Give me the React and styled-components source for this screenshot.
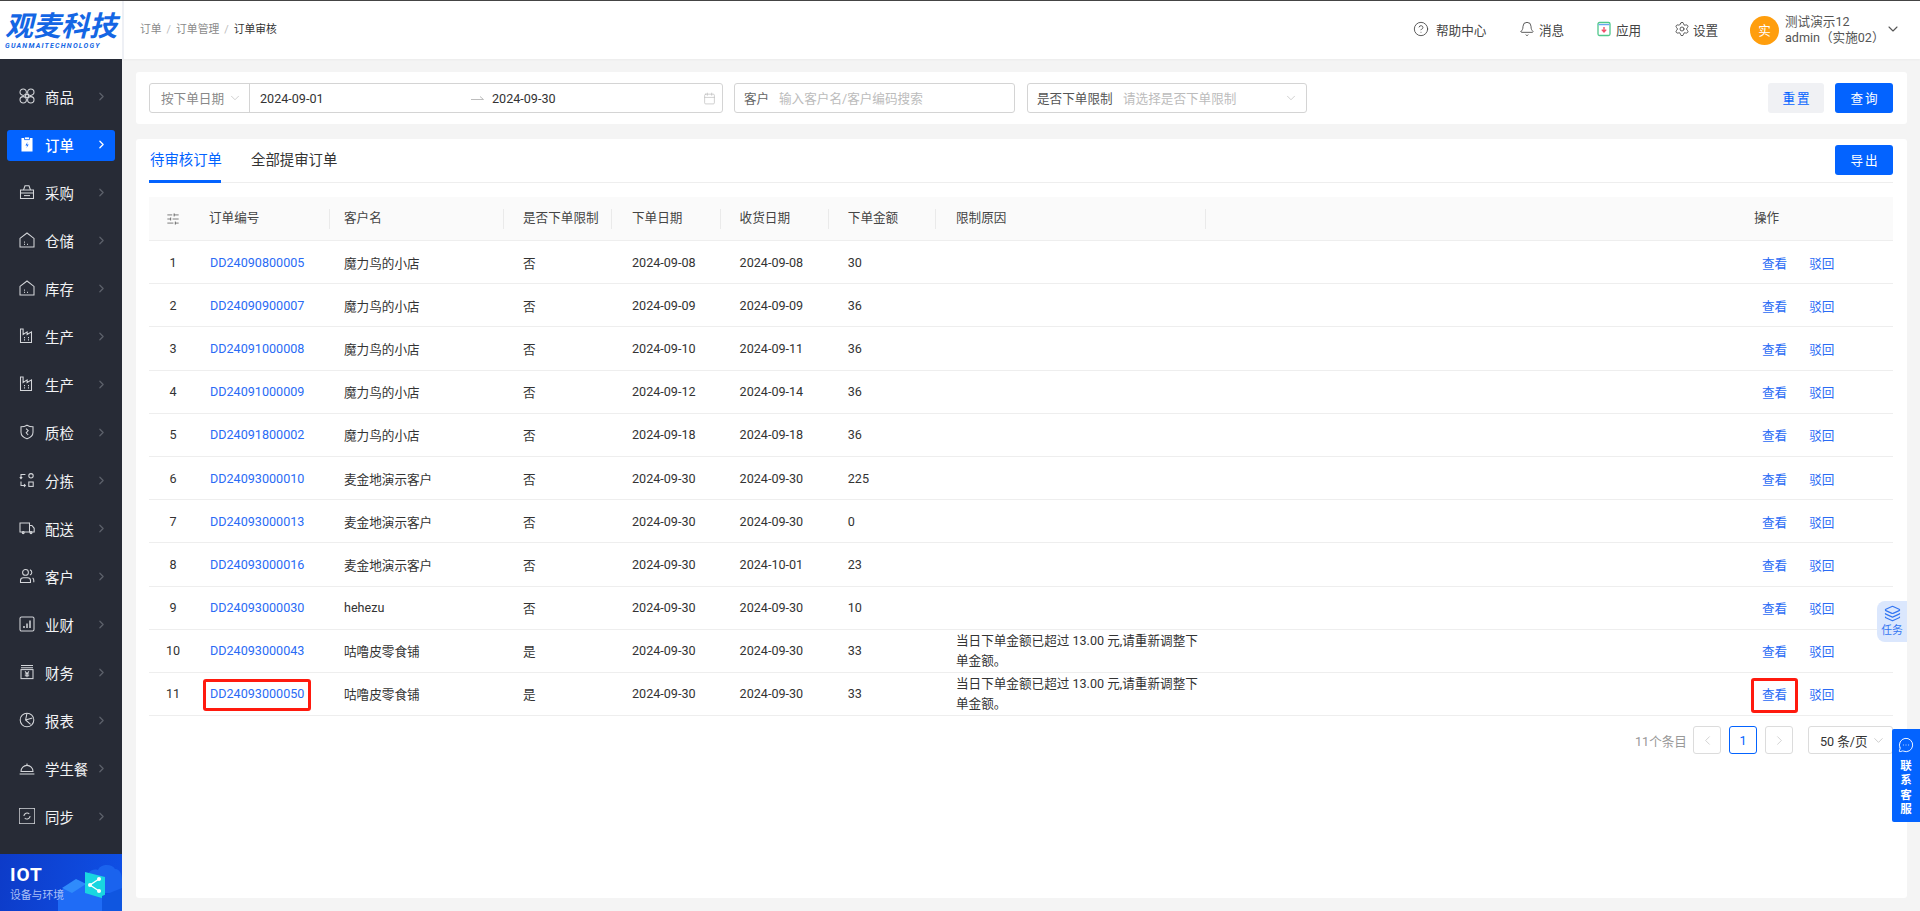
import React from "react";
import styled, { createGlobalStyle } from "styled-components";
import {
  Bell,
  Calendar,
  ChevronDown,
  ChevronLeft,
  ChevronRight,
  CircleHelp,
  Layers,
  MessageCircleMore,
  Settings,
  SlidersHorizontal,
} from "lucide-react";

const BLUE = "#0363ff";
const FONT = `Roboto, "Noto Sans CJK SC", sans-serif`;

const GlobalStyle = createGlobalStyle`
  html, body {
    margin: 0;
    padding: 0;
    height: 100%;
    background: #f4f4f4;
    font-family: ${FONT};
    overflow: hidden;
  }
  * { box-sizing: border-box; }
`;

const menuIcons = {
  goods: (
    <>
      <circle cx="4.2" cy="4.2" r="3.2" />
      <circle cx="11.8" cy="4.2" r="3.2" />
      <circle cx="4.2" cy="11.8" r="3.2" />
      <circle cx="11.8" cy="11.8" r="3.2" />
      <rect x="6.6" y="6.6" width="2.8" height="2.8" />
    </>
  ),
  order: (
    <>
      <path d="M3 2.5h10v12.5H3z" fill="#fff" />
      <path d="M5.5 1h5v2.6h-5z" fill="#fff" stroke="#0363ff" strokeWidth=".8" />
      <path d="M8.6 6 6.4 9.4h1.8L7.4 12l2.3-3.5H7.9z" fill="#0363ff" stroke="none" />
    </>
  ),
  purchase: (
    <>
      <path d="M1.5 6h13v8.5h-13z" />
      <path d="M4.5 6 6 1.8h4L11.5 6" />
      <path d="M1.5 9h13" />
      <path d="M5 11.6h6" />
    </>
  ),
  store: (
    <>
      <path d="M1 6.4 8 1l7 5.4v8.6H1z" />
      <path d="M5 10.2h.9M5 12.4h.9M8 12.4h.9" strokeWidth="1.3" />
    </>
  ),
  factory: (
    <>
      <path d="M1.5 1h2.6v5.5l4-2.6v2.6l4.4-2.6v10.6h-11z" />
      <path d="M5 9.6h1M9 9.6h1M5 11.8h1M9 11.8h1" strokeWidth="1.2" />
    </>
  ),
  shield: (
    <>
      <path d="M8 1.2c2 1.2 4 1.6 6 1.6v5.4c0 3-2.6 5.4-6 6.6-3.4-1.2-6-3.6-6-6.6V2.8c2 0 4-.4 6-1.6z" />
      <path d="M7 4.6l2.2 2-2 2.2 2 2.2" />
    </>
  ),
  sort: (
    <>
      <path d="M6.4 2.5H2v4M.8 5.2 2 6.6l1.2-1.4" />
      <path d="M2 9.5v4h4.4M5 12l1.4 1.5L5 15" />
      <circle cx="12" cy="3.8" r="2.2" />
      <rect x="9.8" y="10" width="4.4" height="4.4" />
    </>
  ),
  truck: (
    <>
      <path d="M1 3h9.5v9H1z" />
      <path d="M10.5 5.5h2.4l2.3 2.8V12h-4.7" />
      <circle cx="4.2" cy="12.6" r="1" />
      <circle cx="12" cy="12.6" r="1" />
    </>
  ),
  people: (
    <>
      <circle cx="6.5" cy="4.4" r="2.9" />
      <path d="M1.5 14.5v-2c0-1.6 1.3-2.7 3-2.7h4c1.7 0 3 1.1 3 2.7v2z" />
      <path d="M11 1.8c1.2.6 1.8 1.6 1.8 2.7S12.2 6.4 11 7M13.6 10c.9.6 1.2 1.6 1.2 2.6v1.6" />
    </>
  ),
  bars: (
    <>
      <rect x="1" y="1" width="14" height="14" rx="1.5" />
      <path d="M5 12v-2M8 12V7.5M11 12V4.5" strokeWidth="1.5" />
    </>
  ),
  finance: (
    <>
      <path d="M2 1.5h12M2 3.8h12" />
      <rect x="2" y="5.6" width="12" height="9" />
      <path d="M6 7.4l2 2.2 2-2.2M5.8 10h4.4M5.8 11.8h4.4M8 9.6v3.6" />
    </>
  ),
  pie: (
    <>
      <circle cx="8" cy="8" r="6.8" />
      <path d="M8 1.2 6.6 8l5 4.4M6.6 8l6.8-2" />
    </>
  ),
  meal: (
    <>
      <path d="M2 11.4a6 6 0 0 1 12 0z" />
      <path d="M.6 14h14.8" />
      <path d="M8 3.4v2" />
    </>
  ),
  sync: (
    <>
      <rect x=".2" y=".2" width="15.6" height="15.6" rx="1.5" />
      <path d="M4.9 8a3.1 3.1 0 0 1 5.4-2M11.1 8a3.1 3.1 0 0 1-5.4 2" />
    </>
  ),
};

const menus = [
  ["goods", "商品"],
  ["order", "订单", true],
  ["purchase", "采购"],
  ["store", "仓储"],
  ["store", "库存"],
  ["factory", "生产"],
  ["factory", "生产"],
  ["shield", "质检"],
  ["sort", "分拣"],
  ["truck", "配送"],
  ["people", "客户"],
  ["bars", "业财"],
  ["finance", "财务"],
  ["pie", "报表"],
  ["meal", "学生餐"],
  ["sync", "同步"],
];

const LIMIT_REASON = "当日下单金额已超过 13.00 元,请重新调整下单金额。";

const orders = [
  ["DD24090800005", "魔力鸟的小店", "否", "2024-09-08", "2024-09-08", "30"],
  ["DD24090900007", "魔力鸟的小店", "否", "2024-09-09", "2024-09-09", "36"],
  ["DD24091000008", "魔力鸟的小店", "否", "2024-09-10", "2024-09-11", "36"],
  ["DD24091000009", "魔力鸟的小店", "否", "2024-09-12", "2024-09-14", "36"],
  ["DD24091800002", "魔力鸟的小店", "否", "2024-09-18", "2024-09-18", "36"],
  ["DD24093000010", "麦金地演示客户", "否", "2024-09-30", "2024-09-30", "225"],
  ["DD24093000013", "麦金地演示客户", "否", "2024-09-30", "2024-09-30", "0"],
  ["DD24093000016", "麦金地演示客户", "否", "2024-09-30", "2024-10-01", "23"],
  ["DD24093000030", "hehezu", "否", "2024-09-30", "2024-09-30", "10"],
  ["DD24093000043", "咕噜皮零食铺", "是", "2024-09-30", "2024-09-30", "33", LIMIT_REASON],
  ["DD24093000050", "咕噜皮零食铺", "是", "2024-09-30", "2024-09-30", "33", LIMIT_REASON],
];

const columns = [
  { title: "订单编号", pad: 12, sep: true },
  { title: "客户名", pad: 14, sep: true },
  { title: "是否下单限制", pad: 19, sep: true },
  { title: "下单日期", pad: 20, sep: true },
  { title: "收货日期", pad: 19, sep: true },
  { title: "下单金额", pad: 19, sep: true },
  { title: "限制原因", pad: 20, sep: true },
  { title: "", pad: 0 },
  { title: "操作", pad: 14 },
];

const Page = styled.div`
  position: relative;
  width: 1920px;
  height: 911px;
  overflow: hidden;
  border-top: 1px solid #444;
  color: #333;
`;

const Sidebar = styled.aside`
  position: absolute;
  left: 0;
  top: 58px;
  bottom: 0;
  width: 122px;
  background: #272b36;
  padding-top: 13px;
`;

const MenuItem = styled.div`
  position: relative;
  display: flex;
  align-items: center;
  height: 48px;
  padding-left: 19px;
  color: ${(p) => (p.$active ? "#fff" : "#f2f3f5")};
  font-size: 14.4px;
  font-weight: ${(p) => (p.$active ? 500 : 400)};
  z-index: 0;

  ${(p) =>
    p.$active &&
    `&::before {
      content: "";
      position: absolute;
      z-index: -1;
      left: 7px;
      right: 7px;
      top: 10px;
      height: 31px;
      border-radius: 3px;
      background: ${BLUE};
    }`}
`;

const MenuIcon = styled.svg`
  width: 16px;
  height: 16px;
  margin-right: 10px;
  fill: none;
  stroke: ${(p) => (p.$active ? "#fff" : "#d4d6da")};
  stroke-width: 1.05;
  flex-shrink: 0;
`;

const MenuArrow = styled(ChevronRight)`
  position: absolute;
  left: 95px;
  top: 18px;
  width: 13px;
  height: 13px;
  color: ${(p) => (p.$active ? "#fff" : "#5c606a")};
  stroke-width: 2.4;
`;

const IotBanner = styled.div`
  position: absolute;
  left: 0;
  right: 0;
  bottom: 0;
  height: 57px;
  overflow: hidden;
  background: linear-gradient(100deg, #0d3bc8 0%, #0f50e6 100%);
  padding: 10px 0 0 10px;
`;

const IotTitle = styled.div`
  position: relative;
  z-index: 1;
  color: #fff;
  font-size: 19px;
  font-weight: 700;
  line-height: 22px;
  letter-spacing: 1px;
`;

const IotSub = styled.div`
  position: relative;
  z-index: 1;
  color: #a9bff5;
  font-size: 10.8px;
  line-height: 15px;
  margin-top: 2px;
`;

const IotArt = styled.svg`
  position: absolute;
  left: 58px;
  top: 4px;
  width: 64px;
  height: 53px;
`;

const Header = styled.header`
  position: absolute;
  left: 0;
  right: 0;
  top: 0;
  height: 58px;
  background: #fff;
  box-shadow: 0 1px 2px rgba(0, 0, 0, 0.04);
`;

const LogoBox = styled.div`
  position: absolute;
  left: 0;
  top: 0;
  width: 124px;
  height: 58px;
  border-right: 2px solid #eef0f5;
  color: #1466e4;
  padding-left: 5px;
`;

const LogoText = styled.div`
  font-size: 28px;
  font-weight: 700;
  font-style: italic;
  line-height: 30px;
  margin-top: 11px;
  white-space: nowrap;
`;

const LogoSub = styled.div`
  font-size: 7px;
  font-weight: 700;
  font-style: italic;
  line-height: 9px;
  letter-spacing: 1.25px;
  white-space: nowrap;
`;

const Breadcrumb = styled.div`
  position: absolute;
  left: 140px;
  top: 21px;
  font-size: 10.8px;
  line-height: 15px;
  color: #8a8a8a;
  white-space: nowrap;
`;

const CrumbSlash = styled.span`
  color: #bbb;
  margin: 0 5px;
`;

const CrumbLast = styled.span`
  color: #333;
`;

const HeaderLink = styled.div`
  position: absolute;
  left: ${(p) => p.$left}px;
  top: 19px;
  height: 18px;
  display: flex;
  align-items: center;
  font-size: 12.6px;
  color: #444;
  white-space: nowrap;

  svg {
    position: absolute;
    left: ${(p) => p.$iconLeft}px;
    top: 1px;
    width: 16px;
    height: 16px;
    stroke-width: 1.3;
  }
`;

const Avatar = styled.div`
  position: absolute;
  left: 1750px;
  top: 15px;
  width: 29px;
  height: 29px;
  border-radius: 50%;
  background: #ff9e0d;
  color: #fff;
  font-size: 12.6px;
  line-height: 29px;
  text-align: center;
`;

const UserLine = styled.div`
  position: absolute;
  left: 1785px;
  top: ${(p) => p.$top}px;
  font-size: 12.6px;
  line-height: 16px;
  color: #555;
  white-space: nowrap;
`;

const UserCaret = styled(ChevronDown)`
  position: absolute;
  left: 1885px;
  top: 20px;
  width: 16px;
  height: 16px;
  color: #555;
  stroke-width: 1.6;
`;

const FilterCard = styled.section`
  position: absolute;
  left: 136px;
  top: 71px;
  width: 1771px;
  height: 52px;
  background: #fff;
  border-radius: 3px;
`;

const Field = styled.div`
  position: absolute;
  left: ${(p) => p.$left}px;
  top: 11px;
  width: ${(p) => p.$width}px;
  height: 30px;
  border: 1px solid #d4d4d4;
  border-radius: 3px;
  font-size: 12.6px;
  line-height: 29px;
  white-space: nowrap;
  background: #fff;
`;

const FieldText = styled.span`
  position: absolute;
  left: ${(p) => p.$left}px;
  top: 0;
  color: ${(p) => p.$color || "#333"};
`;

const FieldDivider = styled.span`
  position: absolute;
  left: 99px;
  top: 0;
  bottom: 0;
  width: 1px;
  background: #d4d4d4;
`;

const FieldCaret = styled(ChevronDown)`
  position: absolute;
  left: ${(p) => p.$left}px;
  top: 7px;
  width: 14px;
  height: 14px;
  color: #bdbdbd;
  stroke-width: 1.2;
`;

const FieldCalendar = styled(Calendar)`
  position: absolute;
  left: 553px;
  top: 8px;
  width: 13px;
  height: 13px;
  color: #bdbdbd;
  stroke-width: 1.3;
`;

const RangeArrow = styled.svg`
  position: absolute;
  left: 321px;
  top: 10px;
  width: 13px;
  height: 8px;
  fill: none;
  stroke: #bdbdbd;
  stroke-width: 1;
`;

const Button = styled.button`
  position: absolute;
  left: ${(p) => p.$left}px;
  top: ${(p) => p.$top}px;
  width: ${(p) => p.$width}px;
  height: 30px;
  padding: 0 0 2px;
  border: 0;
  border-radius: 3px;
  font-family: ${FONT};
  font-size: 12.6px;
  letter-spacing: ${(p) => (p.$spaced ? "2px" : 0)};
  text-indent: ${(p) => (p.$spaced ? "2px" : 0)};
  background: ${(p) => (p.$ghost ? "#f0f1f4" : BLUE)};
  color: ${(p) => (p.$ghost ? BLUE : "#fff")};
`;

const MainCard = styled.section`
  position: absolute;
  left: 136px;
  top: 138px;
  width: 1771px;
  height: 759px;
  background: #fff;
  border-radius: 3px;
`;

const Tabs = styled.div`
  position: absolute;
  left: 13px;
  top: 0;
  width: 1744px;
  height: 44px;
  border-bottom: 1px solid #eeeeee;
`;

const Tab = styled.div`
  position: absolute;
  left: ${(p) => p.$left}px;
  top: 12px;
  height: 32px;
  font-size: 14.4px;
  line-height: 20px;
  white-space: nowrap;
  color: ${(p) => (p.$active ? BLUE : "#333")};
  border-bottom: ${(p) => (p.$active ? `3px solid ${BLUE}` : "0")};
  width: ${(p) => (p.$active ? "72px" : "auto")};
  padding-left: 1px;
`;

const Table = styled.div`
  position: absolute;
  left: 13px;
  top: 58px;
  width: 1744px;
`;

const GRID = "48px 133px 174px 108px 108.6px 108.2px 107.2px 270px 534px 153px";

const HeadRow = styled.div`
  display: grid;
  grid-template-columns: ${GRID};
  height: 44px;
  background: #fafafa;
  border-bottom: 1px solid #eeeeee;
  font-size: 12.6px;
  align-items: center;
`;

const HeadCell = styled.div`
  position: relative;
  height: 100%;
  line-height: 42px;
  padding-left: ${(p) => p.$pad}px;
  color: #444;
  white-space: nowrap;

  ${(p) =>
    p.$sep &&
    `&::after {
      content: "";
      position: absolute;
      right: 0;
      top: 12px;
      height: 20px;
      width: 1px;
      background: #eaeaea;
    }`}
`;

const IndexHead = styled.div`
  display: flex;
  justify-content: center;
  color: #555;

  svg {
    width: 14px;
    height: 14px;
    stroke-width: 1.3;
  }
`;

const BodyRow = styled.div`
  display: grid;
  grid-template-columns: ${GRID};
  height: 43.2px;
  border-bottom: 1px solid #eeeeee;
  font-size: 12.6px;
  align-items: center;
  color: #333;
`;

const IndexCell = styled.div`
  text-align: center;
  padding-left: 0;
`;

const Cell = styled.div`
  padding-left: ${(p) => p.$pad}px;
  white-space: nowrap;
`;

const OrderLink = styled.span`
  color: #2a6bf5;
  position: relative;
`;

const ReasonCell = styled.div`
  padding: 0 8px 0 20px;
  line-height: 19.6px;
  word-break: break-all;
`;

const ActionCell = styled.div`
  padding-left: 22px;
  white-space: nowrap;
  color: #2a6bf5;
`;

const ActionLink = styled.span`
  margin-right: 22px;
`;

const RedBox = styled.div`
  position: absolute;
  left: ${(p) => p.$left}px;
  top: ${(p) => p.$top}px;
  width: ${(p) => p.$width}px;
  height: ${(p) => p.$height}px;
  border: 3px solid #ff1a0e;
  border-radius: 3px;
  pointer-events: none;
`;

const Pager = styled.div`
  position: absolute;
  left: 0;
  top: 587px;
  width: 100%;
  height: 28px;
  font-size: 12.6px;
`;

const PagerTotal = styled.span`
  position: absolute;
  left: 1499px;
  top: 5px;
  color: #999;
  white-space: nowrap;
`;

const PageBox = styled.div`
  position: absolute;
  left: ${(p) => p.$left}px;
  top: 0;
  width: ${(p) => p.$width || 28}px;
  height: 28px;
  border: 1px solid ${(p) => (p.$active ? BLUE : "#dcdcdc")};
  border-radius: 3px;
  color: ${(p) => (p.$active ? BLUE : "#c4c4c4")};
  display: flex;
  align-items: center;
  justify-content: center;

  svg {
    width: 15px;
    height: 15px;
    stroke-width: 1.2;
  }
`;

const PageSize = styled.span`
  position: absolute;
  left: 11px;
  top: 4px;
  color: #333;
  white-space: nowrap;
`;

const PageCaret = styled(ChevronDown)`
  position: absolute;
  left: 62px;
  top: 6px;
  color: #bdbdbd;
`;

const TaskTab = styled.div`
  position: absolute;
  left: 1877px;
  top: 600px;
  width: 30px;
  height: 41px;
  background: #dbe7fd;
  border-radius: 8px 0 0 8px;
  color: #3376f2;
  font-size: 10.8px;
  line-height: 14px;
  text-align: center;
  padding-top: 4px;

  svg {
    display: block;
    margin: 0 auto 2px;
    width: 17px;
    height: 17px;
    stroke-width: 1.7;
  }
`;

const ServiceTab = styled.div`
  position: absolute;
  left: 1892px;
  top: 728px;
  width: 28px;
  height: 93px;
  background: ${BLUE};
  border-radius: 2px 0 0 2px;
  color: #fff;
  font-size: 11.5px;
  font-weight: 700;
  line-height: 14.4px;
  text-align: center;
  padding-top: 8px;

  svg {
    display: block;
    margin: 0 auto 6px;
    width: 16px;
    height: 16px;
    stroke-width: 1.4;
  }
`;

export default function App() {
  return (
    <Page>
      <GlobalStyle />
      <Header>
        <LogoBox>
          <LogoText>观麦科技</LogoText>
          <LogoSub>GUANMAITECHNOLOGY</LogoSub>
        </LogoBox>
        <Breadcrumb>
          订单<CrumbSlash>/</CrumbSlash>订单管理<CrumbSlash>/</CrumbSlash>
          <CrumbLast>订单审核</CrumbLast>
        </Breadcrumb>
        <HeaderLink $left={1436} $iconLeft={-23}>
          <CircleHelp />
          帮助中心
        </HeaderLink>
        <HeaderLink $left={1539} $iconLeft={-20}>
          <Bell />
          消息
        </HeaderLink>
        <HeaderLink $left={1616} $iconLeft={-20}>
          <svg viewBox="0 0 16 16" fill="none">
            <rect x="2" y="1.5" width="12" height="13" rx="1.5" stroke="#4fc78a" strokeWidth="1.3" />
            <path d="M2.5 3.6h11" stroke="#6aa6f0" strokeWidth="1.3" />
            <path d="M8 6v4.5M5.8 8.6 8 11l2.2-2.4" stroke="#f0506a" strokeWidth="1.4" />
          </svg>
          应用
        </HeaderLink>
        <HeaderLink $left={1693} $iconLeft={-19}>
          <Settings />
          设置
        </HeaderLink>
        <Avatar>实</Avatar>
        <UserLine $top={13}>测试演示12</UserLine>
        <UserLine $top={29}>admin（实施02）</UserLine>
        <UserCaret />
      </Header>

      <Sidebar>
        {menus.map(([icon, label, active], i) => (
          <MenuItem key={i} $active={active}>
            <MenuIcon viewBox="0 0 16 16" $active={active}>
              {menuIcons[icon]}
            </MenuIcon>
            {label}
            <MenuArrow $active={active} />
          </MenuItem>
        ))}
        <IotBanner>
          <IotTitle>IOT</IotTitle>
          <IotSub>设备与环境</IotSub>
          <IotArt viewBox="0 0 64 53">
            <path d="M0 53V34l20-12 24 12v19z" fill="#1f6cf6" />
            <path d="M4 30l14-9 10 5-14 9z" fill="#2f8bfb" />
            <path d="M28 22c0-7 6-12 12-10 2-6 14-7 17-1 5 0 7 6 7 10v14H34c-4-2-6-8-6-13z" fill="#1a63ee" />
            <path d="M27 14l20 5v22l-20-6z" fill="#19d6e0" />
            <circle cx="32" cy="27" r="2" fill="#fff" />
            <circle cx="41" cy="21" r="2" fill="#fff" />
            <circle cx="41" cy="33" r="2" fill="#fff" />
            <path d="M41 21l-9 6 9 6" stroke="#fff" strokeWidth="1.3" fill="none" />
            <path d="M44 53V38l20-8v23z" fill="#0f56e0" />
          </IotArt>
        </IotBanner>
      </Sidebar>

      <FilterCard>
        <Field $left={13} $width={574}>
          <FieldText $left={11} $color="#888">按下单日期</FieldText>
          <FieldCaret $left={78} />
          <FieldDivider />
          <FieldText $left={110}>2024-09-01</FieldText>
          <RangeArrow viewBox="0 0 13 8">
            <path d="M0 5.5h12.5L9 2.5" />
          </RangeArrow>
          <FieldText $left={342}>2024-09-30</FieldText>
          <FieldCalendar />
        </Field>
        <Field $left={598} $width={281}>
          <FieldText $left={9} $color="#666">客户</FieldText>
          <FieldText $left={44} $color="#bcbcbc">输入客户名/客户编码搜索</FieldText>
        </Field>
        <Field $left={891} $width={280}>
          <FieldText $left={9} $color="#555">是否下单限制</FieldText>
          <FieldText $left={95} $color="#bcbcbc">请选择是否下单限制</FieldText>
          <FieldCaret $left={256} />
        </Field>
        <Button $ghost $spaced $left={1632} $top={11} $width={56}>重置</Button>
        <Button $spaced $left={1699} $top={11} $width={58}>查询</Button>
      </FilterCard>

      <MainCard>
        <Tabs>
          <Tab $active $left={0}>待审核订单</Tab>
          <Tab $left={101}>全部提审订单</Tab>
        </Tabs>
        <Button $spaced $left={1699} $top={6} $width={58}>导出</Button>
        <Table>
          <HeadRow>
            <IndexHead>
              <SlidersHorizontal />
            </IndexHead>
            {columns.map((col, i) => (
              <HeadCell key={i} $pad={col.pad} $sep={col.sep}>
                {col.title}
              </HeadCell>
            ))}
          </HeadRow>
          {orders.map((row, i) => (
            <BodyRow key={row[0]}>
              <IndexCell>{i + 1}</IndexCell>
              <Cell $pad={13}>
                <OrderLink>{row[0]}</OrderLink>
              </Cell>
              <Cell $pad={14}>{row[1]}</Cell>
              <Cell $pad={19}>{row[2]}</Cell>
              <Cell $pad={20}>{row[3]}</Cell>
              <Cell $pad={19}>{row[4]}</Cell>
              <Cell $pad={19}>{row[5]}</Cell>
              <ReasonCell>{row[6]}</ReasonCell>
              <div />
              <ActionCell>
                <ActionLink>查看</ActionLink>
                驳回
              </ActionCell>
            </BodyRow>
          ))}
        </Table>
        <RedBox $left={67} $top={540} $width={108} $height={32} />
        <RedBox $left={1615} $top={539} $width={47} $height={35} />
        <Pager>
          <PagerTotal>11个条目</PagerTotal>
          <PageBox $left={1557}>
            <ChevronLeft />
          </PageBox>
          <PageBox $left={1593} $active>1</PageBox>
          <PageBox $left={1629}>
            <ChevronRight />
          </PageBox>
          <PageBox $left={1672} $width={85}>
            <PageSize>50 条/页</PageSize>
            <PageCaret />
          </PageBox>
        </Pager>
      </MainCard>

      <TaskTab>
        <Layers />
        任务
      </TaskTab>
      <ServiceTab>
        <MessageCircleMore />
        联<br />系<br />客<br />服
      </ServiceTab>
    </Page>
  );
}
